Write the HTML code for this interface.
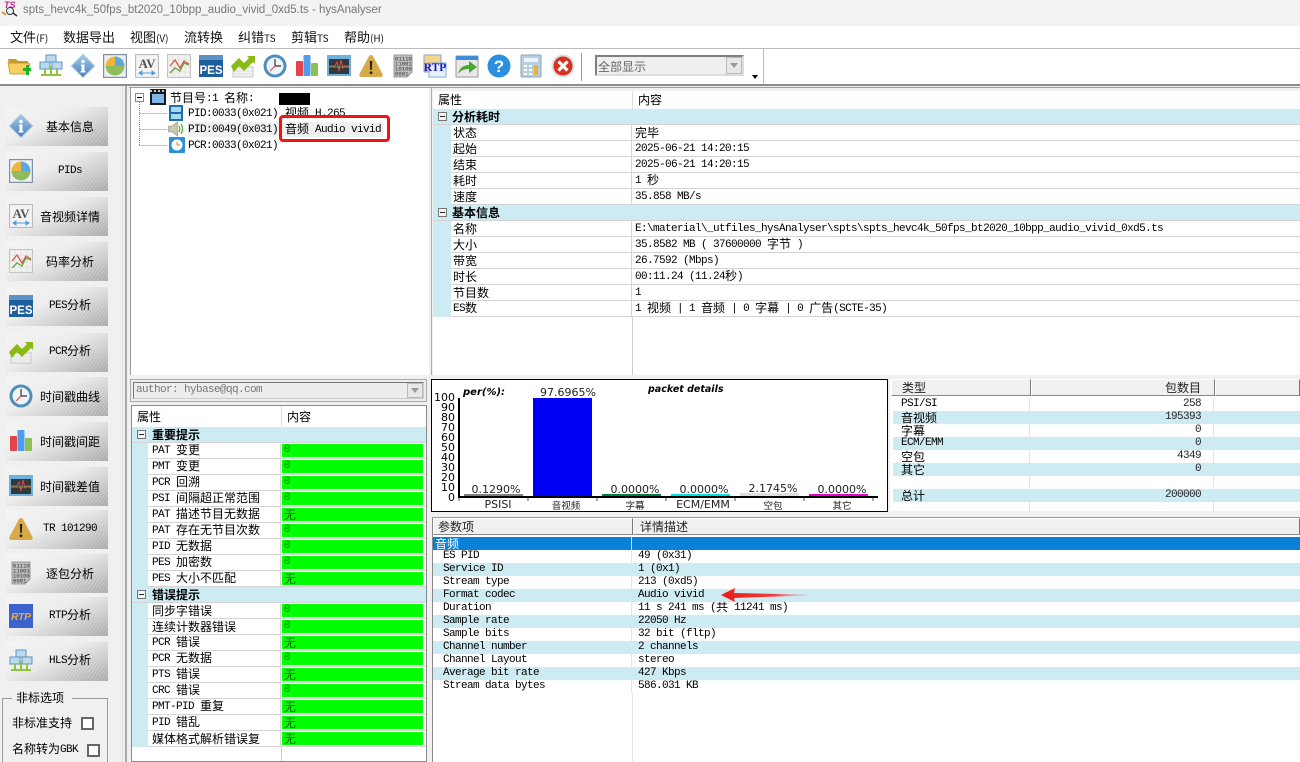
<!DOCTYPE html>
<html><head><meta charset="utf-8"><style>
*{box-sizing:border-box;margin:0;padding:0}
html,body{width:1300px;height:762px;overflow:hidden;background:#f0f0f0}
body{position:relative;font:12px "WenQuanYi Zen Hei","Noto Sans CJK SC",sans-serif;color:#000}
.p{position:absolute}
s{text-decoration:none;font-size:12px;letter-spacing:0;line-height:0;position:relative;top:1px;font-family:"WenQuanYi Zen Hei","Noto Sans CJK SC",sans-serif}
.m{font-family:"Liberation Mono",monospace;font-size:11px;letter-spacing:-.6px;white-space:pre}
#menu span{position:absolute;top:28px;font:13px/17px "Noto Sans CJK SC",sans-serif;color:#111;white-space:pre}
#menu small{font-size:10px}
.ti{position:absolute;top:54px;width:24px;height:24px}
.btn{position:absolute;left:6px;width:102px;height:39px;background:repeating-linear-gradient(125deg,rgba(255,255,255,.22) 0 1px,rgba(255,255,255,0) 1px 3px),linear-gradient(155deg,#f3f3f3 0,#ececec 40%,#d2d2d2 65%,#a8a8a8 100%)}
.btn svg{position:absolute;left:3px;top:7px;width:24px;height:24px}
.btn b{position:absolute;left:26px;right:0;top:0;text-align:center;font-weight:normal;line-height:39px;white-space:pre}
.t{position:absolute;background:#fff;overflow:hidden}
.r{display:flex;white-space:pre;border-bottom:1px solid #d4d4d4}
.r>*{display:block;flex:none;overflow:hidden}
.r>.g{margin-bottom:-1px;overflow:visible}
.sec{background:#cdebf2;font-weight:bold;position:relative;white-space:pre;border-bottom:1px solid #d4d4d4}
.sec i{position:absolute;width:9px;height:9px;border:1px solid #777;background:#f4f4f4}
.sec i:after{content:"";position:absolute;left:1px;right:1px;top:3px;height:1px;background:#222}
#tA{left:433px;top:91px;width:867px;height:284px}
#tA .r,#tA .sec{height:16px;line-height:15px}
#tA .g{width:18px;background:#cdebf2}
#tA .a{width:181px;padding-left:2px;border-right:1px solid #d4d4d4}
#tA .b{padding-left:3px}
#tA .m{padding-top:1px}
#tA .sec{padding-left:19px}
#tA .sec i{left:5px;top:3px}
#tB{left:131px;top:405px;width:296px;height:357px;border:1px solid #8a8a8a}
#tB .r,#tB .sec{height:16px;line-height:15px}
#tB .g{width:16px;background:#cdebf2}
#tB .a{width:133px;padding-left:4px;border-right:1px solid #d4d4d4}
#tB .a.m{padding-top:1px}
#tB .b{width:141px;height:13px;margin:1px 0 0 1px;background:#0f0;padding-left:2px;line-height:13px;color:#060}
#tB .sec{padding-left:20px}
#tB .sec i{left:5px;top:3px}
#tD{left:890px;top:379px;width:410px;height:132px}
.hd{position:absolute;top:0;height:17px;background:#f0f0f0;border:1px solid;border-color:#fff #777 #888 #fff;line-height:16px;color:#222}
#tD .r{position:absolute;left:3px;width:407px;height:13px;line-height:13px;border:0;overflow:hidden}
#tD .r.c,#tE .r.c{background:#cdebf2}
#tD .a{width:137px;padding-left:8px;border-right:1px solid #e4e4e4}
#tD .b{width:184px;padding-right:12px;text-align:right;border-right:1px solid #e4e4e4;color:#222}
#tE{left:432px;top:518px;width:868px;height:244px}
#tE .r{height:13px;line-height:13px;border:0}
#tE .a{width:200px;padding-left:11px;border-right:1px solid #e4e4e4}
#tE .b{padding-left:6px}
</style></head><body>
<svg width="0" height="0" style="position:absolute"><defs>
<linearGradient id="gB" x1="0" y1="0" x2="0" y2="1"><stop offset="0" stop-color="#a9cdec"/><stop offset="1" stop-color="#3f7db8"/></linearGradient>
<linearGradient id="gArrow" x1="0" y1="0" x2="1" y2="0"><stop offset="0" stop-color="#f01818"/><stop offset=".6" stop-color="#f23c3c"/><stop offset="1" stop-color="#f6b0b0" stop-opacity=".4"/></linearGradient>
<symbol id="folder" viewBox="0 0 24 24"><path d="M1 5h8l2 2h10v13H3z" fill="#c99a2c"/><path d="M1 9h20l2 1-3 10H3z" fill="#f6cf5e" stroke="#c0902a" stroke-width=".7"/><path d="M16 14h3v-3h3v3h2v3h-2v4h-3v-4h-3z" fill="#1fb32c"/></symbol>
<symbol id="net" viewBox="0 0 24 24"><path d="M7 1h10v7H7zM1 8h10v7H1zM13 8h10v7H13z" fill="#bcd9ef" stroke="#5f93bf"/><path d="M2 21h20M6 15v6M12 12v9M18 15v6" stroke="#8fc43c" stroke-width="2" fill="none"/></symbol>
<symbol id="info" viewBox="0 0 24 24"><path d="M12 0.5 23.500 12 12 23.500.5 12z" fill="url(#gB)" stroke="#a6c3dc"/><circle cx="12" cy="7.500" r="1.800" fill="#fff"/><path d="M10 10.500h3.500v6.500h1v1.500h-5V17h1v-5H10z" fill="#fff"/></symbol>
<symbol id="pie" viewBox="0 0 24 24"><rect x=".6" y=".6" width="22.800" height="22.800" fill="#eef0f2" stroke="#7f90a0" stroke-width="1.200"/><path d="M12 12V2.500A9.500 9.500 0 0 0 2.500 12z" fill="#f0b63c"/><path d="M12 12V2.500A9.500 9.500 0 0 1 21.500 12z" fill="#5da8dc"/><path d="M2.500 12a9.500 9.500 0 0 0 19 0z" fill="#90bc5c"/></symbol>
<symbol id="av" viewBox="0 0 24 24"><rect x=".5" y=".5" width="23" height="23" fill="#f4f4f4" stroke="#bbb" stroke-width="1.200"/><text x="12" y="14" text-anchor="middle" font-family="Liberation Serif" font-weight="bold" font-size="13" fill="#555">AV</text><path d="M4 19h16M4 19l3-2v4zM20 19l-3-2v4z" stroke="#4b9fe0" fill="#4b9fe0"/></symbol>
<symbol id="line" viewBox="0 0 24 24"><rect x=".5" y=".5" width="23" height="23" fill="#f2f2f2" stroke="#c4c4c4" stroke-width="1.200"/><path d="M6 1v22M12 1v22M18 1v22M1 6h22M1 12h22M1 18h22" stroke="#ddd" stroke-width=".7"/><path d="M3 12l5-6 5 8 4-7 5 3" stroke="#d9584a" fill="none" stroke-width="1.300"/><path d="M3 19l5-5 5 3 4-8 5 2" stroke="#6aa33c" fill="none" stroke-width="1.300"/></symbol>
<symbol id="pes" viewBox="0 0 24 24"><path d="M0 1h24v6H0z" fill="#5c93c4"/><rect y="6" width="24" height="17" fill="#1d5f9c"/><text x="12" y="20" text-anchor="middle" font-family="Liberation Sans" font-weight="bold" font-size="11.500" fill="#fff">PES</text></symbol>
<symbol id="trend" viewBox="0 0 24 24"><path d="M2 13h20v10H2z" fill="#f2f2f2" stroke="#c6c6c6"/><path d="M2 17h20M2 20h20" stroke="#ddd"/><path d="M0 12 8 4l5 5 5-5-2-2h8v8l-2-2-9 9-5-5-5 6z" fill="#8cba14"/></symbol>
<symbol id="clock" viewBox="0 0 24 24"><circle cx="12" cy="12" r="11.500" fill="#4f8dbb"/><circle cx="12" cy="12" r="8.500" fill="#eef4f8"/><path d="M12 12V5M12 12h6" stroke="#333" fill="none" stroke-width="1.200"/><path d="M12 12l-5 5" stroke="#d2544a" stroke-width="1.200"/></symbol>
<symbol id="bars" viewBox="0 0 24 24"><rect x="1" y="7" width="7" height="15" rx="1" fill="#e5434a"/><rect x="8.500" y="1" width="7" height="21" rx="1" fill="#4f9cec"/><rect x="16" y="9" width="7" height="13" rx="1" fill="#8cbf55"/></symbol>
<symbol id="mon" viewBox="0 0 24 24"><rect y="1" width="24" height="21" fill="#6fb1dd"/><rect x="2" y="5" width="20" height="15" fill="#2e3a40"/><path d="M2 12h6l2-4 2 9 2-11 2 8 1-2h5" stroke="#e44" fill="none"/><path d="M2 13h20" stroke="#5c5" stroke-width=".8"/></symbol>
<symbol id="warn" viewBox="0 0 24 24"><path d="M12 1c1 0 1.800.6 2.500 2L23.500 20c.7 1.800-.3 3-2 3h-19c-1.700 0-2.700-1.200-2-3L9.500 3C10.200 1.600 11 1 12 1z" fill="#d7a947"/><path d="M10.800 7h2.400l-.4 9h-1.600z" fill="#222"/><circle cx="12" cy="18.800" r="1.400" fill="#222"/></symbol>
<symbol id="bin" viewBox="0 0 24 24"><path d="M3 1h18v17l-5 5H3z" fill="#bdbdbd" stroke="#999"/><g font-family="Liberation Mono" font-size="5.600" fill="#333"><text x="4" y="6.500">01110</text><text x="4" y="11.500">11001</text><text x="4" y="16.500">10100</text><text x="4" y="21.500">0001</text></g></symbol>
<symbol id="rtp" viewBox="0 0 24 24"><rect x="1" y="1" width="17" height="17" fill="#f3d58c" stroke="#7fa8cf"/><rect x="6" y="9" width="17" height="14" fill="#e8f1f8" stroke="#7fa8cf"/><text x="12" y="17" text-anchor="middle" font-family="Liberation Serif" font-weight="bold" font-size="11.500" fill="#1515e0">RTP</text></symbol>
<symbol id="rtp2" viewBox="0 0 24 24"><rect width="24" height="24" fill="#3c62cf"/><text x="12" y="16" text-anchor="middle" font-family="Liberation Sans" font-weight="bold" font-style="italic" font-size="10" fill="#f6a93a">RTP</text></symbol>
<symbol id="go" viewBox="0 0 24 24"><rect x="1" y="2" width="22" height="21" fill="#e8e8e8" stroke="#999"/><rect x="1" y="2" width="22" height="4" fill="#3c8fd8"/><path d="M3 20c1-6 6-9 11-9V7l8 6-8 6v-4c-4 0-8 1-11 5z" fill="#49a62e"/></symbol>
<symbol id="help" viewBox="0 0 24 24"><circle cx="12" cy="12" r="11.500" fill="#2b8fe0"/><text x="12" y="18" text-anchor="middle" font-family="Liberation Sans" font-weight="bold" font-size="17" fill="#fff">?</text></symbol>
<symbol id="calc" viewBox="0 0 24 24"><rect x="2" y="1" width="20" height="22" rx="1" fill="#b7cfe3" stroke="#8ba4b8"/><rect x="5" y="4" width="14" height="4" fill="#eef4f8"/><path d="M5 11h3v2H5zM10 11h3v2h-3zM5 15h3v2H5zM10 15h3v2h-3zM5 19h3v2H5zM10 19h3v2h-3z" fill="#fff"/><path d="M15 11h4v10h-4z" fill="#e8b040"/></symbol>
<symbol id="close" viewBox="0 0 24 24"><circle cx="12" cy="12" r="11.500" fill="#ddd"/><circle cx="12" cy="12" r="9.500" fill="#d83020"/><path d="M7.500 7.500l9 9M16.500 7.500l-9 9" stroke="#fff" stroke-width="3.200"/></symbol>
<symbol id="film" viewBox="0 0 16 16"><rect width="16" height="16" fill="#1a1a1a"/><rect x="2" y="5" width="12" height="9" fill="#7fb8e6"/><path d="M0 2h16" stroke="#ccc" stroke-width="2" stroke-dasharray="2 2"/></symbol>
<symbol id="vid" viewBox="0 0 16 16"><rect x="1" width="14" height="16" fill="#1d6fa8"/><rect x="3" y="2" width="10" height="5" fill="#a9d8f2"/><rect x="3" y="9" width="10" height="5" fill="#a9d8f2"/></symbol>
<symbol id="snd" viewBox="0 0 16 16"><path d="M1 5h4l5-4v14l-5-4H1z" fill="#c9c9a8" stroke="#888" stroke-width=".6"/><path d="M11.500 5c1 2 1 4 0 6M13.500 3c2 3 2 7 0 10" stroke="#58b030" fill="none" stroke-width="1.300"/></symbol>
<symbol id="clk2" viewBox="0 0 16 16"><rect width="16" height="16" rx="1" fill="#2f90d8"/><circle cx="8" cy="8" r="5.500" fill="#fff"/><path d="M8 8V5M8 8h3" stroke="#c83"/></symbol>
</defs></svg>

<div class="p" style="left:0;top:0;width:1300px;height:26px;background:#f3f3f3"></div>
<svg class="p" style="left:1px;top:0" width="18" height="18" viewBox="0 0 18 18"><text x="3" y="8" font-family="Liberation Sans" font-weight="bold" font-style="italic" font-size="9" fill="#d02090">TS</text><circle cx="9" cy="11" r="3.500" fill="#e8f2f8" stroke="#333"/><path d="M12 13l4 3" stroke="#333" stroke-width="1.500"/><path d="M1 12l4 3" stroke="#c8a030" stroke-width="2"/></svg>
<div class="p" style="left:23px;top:2px;font:11.500px/17px 'Liberation Sans',sans-serif;color:#777;white-space:pre">spts_hevc4k_50fps_bt2020_10bpp_audio_vivid_0xd5.ts - hysAnalyser</div>

<div id="menu" class="p" style="left:0;top:0;width:1300px;height:48px"><div class="p" style="left:0;top:26px;width:1300px;height:22px;background:#fff"></div>
<span style="left:10px">文件<small>(F)</small></span><span style="left:63px">数据导出</span><span style="left:130px">视图<small>(V)</small></span><span style="left:184px">流转换</span><span style="left:238px">纠错<small>TS</small></span><span style="left:291px">剪辑<small>TS</small></span><span style="left:344px">帮助<small>(H)</small></span></div>

<div class="p" style="left:0;top:48px;width:1300px;height:38px;background:#fff;border-top:1px solid #bbb;border-bottom:2px solid #8c8c8c"></div>
<div class="p" style="left:763px;top:48px;width:1px;height:36px;background:#bbb"></div>
<svg class="ti" style="left:7px"><use href="#folder"/></svg>
<svg class="ti" style="left:39px"><use href="#net"/></svg>
<svg class="ti" style="left:71px"><use href="#info"/></svg>
<svg class="ti" style="left:103px"><use href="#pie"/></svg>
<svg class="ti" style="left:135px"><use href="#av"/></svg>
<svg class="ti" style="left:167px"><use href="#line"/></svg>
<svg class="ti" style="left:199px"><use href="#pes"/></svg>
<svg class="ti" style="left:231px"><use href="#trend"/></svg>
<svg class="ti" style="left:263px"><use href="#clock"/></svg>
<svg class="ti" style="left:295px"><use href="#bars"/></svg>
<svg class="ti" style="left:327px"><use href="#mon"/></svg>
<svg class="ti" style="left:359px"><use href="#warn"/></svg>
<svg class="ti" style="left:391px"><use href="#bin"/></svg>
<svg class="ti" style="left:423px"><use href="#rtp"/></svg>
<svg class="ti" style="left:455px"><use href="#go"/></svg>
<svg class="ti" style="left:487px"><use href="#help"/></svg>
<svg class="ti" style="left:519px"><use href="#calc"/></svg>
<svg class="ti" style="left:551px"><use href="#close"/></svg>
<div class="p" style="left:581px;top:53px;width:1px;height:28px;background:#999"></div>
<div class="p" style="left:595px;top:55px;width:149px;height:21px;background:#efefef;border:2px solid #808080;border-right-color:#ddd;border-bottom-color:#ddd;color:#666;line-height:19px;padding-left:1px">全部显示</div>
<div class="p" style="left:726px;top:57px;width:16px;height:17px;background:#e8e8e8;border:1px solid #bbb"></div>
<div class="p" style="left:730px;top:63px;border:4px solid transparent;border-top:5px solid #999"></div>
<div class="p" style="left:752px;top:75px;border:3px solid transparent;border-top:4px solid #000"></div>

<div class="p" style="left:122px;top:86px;width:1px;height:676px;background:#ddd"></div>
<div class="p" style="left:125px;top:86px;width:2px;height:676px;background:#a8a8a8"></div>

<div class="btn" style="top:107px"><svg><use href="#info"/></svg><b>基本信息</b></div>
<div class="btn" style="top:152px"><svg><use href="#pie"/></svg><b class="m">PIDs</b></div>
<div class="btn" style="top:197px"><svg><use href="#av"/></svg><b>音视频详情</b></div>
<div class="btn" style="top:242px"><svg><use href="#line"/></svg><b>码率分析</b></div>
<div class="btn" style="top:287px"><svg><use href="#pes"/></svg><b class="m">PES<s>分析</s></b></div>
<div class="btn" style="top:333px"><svg><use href="#trend"/></svg><b class="m">PCR<s>分析</s></b></div>
<div class="btn" style="top:377px"><svg><use href="#clock"/></svg><b>时间戳曲线</b></div>
<div class="btn" style="top:422px"><svg><use href="#bars"/></svg><b>时间戳间距</b></div>
<div class="btn" style="top:467px"><svg><use href="#mon"/></svg><b>时间戳差值</b></div>
<div class="btn" style="top:510px"><svg><use href="#warn"/></svg><b class="m">TR 101290</b></div>
<div class="btn" style="top:554px"><svg><use href="#bin"/></svg><b>逐包分析</b></div>
<div class="btn" style="top:597px"><svg><use href="#rtp2"/></svg><b class="m">RTP<s>分析</s></b></div>
<div class="btn" style="top:642px"><svg><use href="#net"/></svg><b class="m">HLS<s>分析</s></b></div>

<div class="p" style="left:2px;top:698px;width:106px;height:70px;border:1px solid #999"></div>
<div class="p" style="left:12px;top:690px;padding:0 4px;background:#f0f0f0;line-height:16px;width:60px">非标选项</div>
<div class="p" style="left:12px;top:715px;line-height:16px">非标准支持</div>
<div class="p" style="left:81px;top:717px;width:13px;height:13px;background:#fff;border:2px solid #666"></div>
<div class="p m" style="left:12px;top:742px;line-height:16px"><s>名称转为</s>GBK</div>
<div class="p" style="left:87px;top:744px;width:13px;height:13px;background:#fff;border:2px solid #666"></div>

<div class="p" style="left:129px;top:87px;width:1171px;height:1px;background:#a0a0a0"></div>
<div class="t" style="left:130px;top:88px;width:299px;height:287px;border-left:1px solid #999">
<svg class="p" width="60" height="70" style="left:0;top:0"><path d="M8.500 14v43M8.500 25.500h28M8.500 41.500h28M8.500 57.500h28" stroke="#888" stroke-dasharray="1 1" fill="none"/><rect x="4.500" y="5.500" width="8" height="8" fill="#fff" stroke="#888"/><path d="M6 9.500h5" stroke="#000"/><use href="#film" x="19" y="1" width="16" height="16"/><use href="#vid" x="37" y="17" width="16" height="16"/><use href="#snd" x="36" y="33" width="17" height="16"/><use href="#clk2" x="38" y="49" width="16" height="16"/></svg>
<div class="p" style="left:39px;top:1px;line-height:16px;white-space:pre"><s>节目号</s><span class="m">:1 </span><s>名称</s><span class="m">:</span></div>
<div class="p" style="left:148px;top:5px;width:31px;height:12px;background:#000"></div>
<div class="p m" style="left:57px;top:18px;line-height:16px">PID:0033(0x021)</div>
<div class="p m" style="left:154px;top:18px;line-height:16px"><s>视频</s> H.265</div>
<div class="p" style="left:57px;top:34px;width:195px;height:15px;background:#f0f0f0"></div>
<div class="p m" style="left:57px;top:34px;line-height:16px">PID:0049(0x031)</div>
<div class="p m" style="left:154px;top:34px;line-height:16px"><s>音频</s> Audio vivid</div>
<div class="p m" style="left:57px;top:50px;line-height:16px">PCR:0033(0x021)</div>
<div class="p" style="left:148px;top:27px;width:111px;height:27px;border:3px solid #f01414;border-radius:4px"></div>
</div>
<div class="p" style="left:431px;top:88px;width:1px;height:287px;background:#aaa"></div>

<div class="p" style="left:130px;top:379px;width:297px;height:23px;background:#ededed;border:1px solid #aaa"></div>
<div class="p m" style="left:133px;top:382px;width:291px;height:17px;border:1px solid #777;border-right-color:#ccc;border-bottom-color:#ccc;color:#777;line-height:15px;padding-left:2px">author: hybase@qq.com</div>
<div class="p" style="left:407px;top:383px;width:16px;height:15px;background:#e8e8e8;border:1px solid #bbb"></div>
<div class="p" style="left:411px;top:388px;border:4px solid transparent;border-top:5px solid #999"></div>

<div class="t" id="tB">
<div style="height:21px;line-height:21px;position:relative;white-space:pre"><span class="p" style="left:5px">属性</span><span class="p" style="left:155px">内容</span><span class="p" style="left:149px;top:0;width:1px;height:21px;background:#ddd"></span></div>
<div class="sec">重要提示<i></i></div>
<div class="r"><i class="g"></i><span class="a m">PAT <s>变更</s></span><span class="b m">0</span></div>
<div class="r"><i class="g"></i><span class="a m">PMT <s>变更</s></span><span class="b m">0</span></div>
<div class="r"><i class="g"></i><span class="a m">PCR <s>回溯</s></span><span class="b m">0</span></div>
<div class="r"><i class="g"></i><span class="a m">PSI <s>间隔超正常范围</s></span><span class="b m">0</span></div>
<div class="r"><i class="g"></i><span class="a m">PAT <s>描述节目无数据</s></span><span class="b">无</span></div>
<div class="r"><i class="g"></i><span class="a m">PAT <s>存在无节目次数</s></span><span class="b m">0</span></div>
<div class="r"><i class="g"></i><span class="a m">PID <s>无数据</s></span><span class="b m">0</span></div>
<div class="r"><i class="g"></i><span class="a m">PES <s>加密数</s></span><span class="b m">0</span></div>
<div class="r"><i class="g"></i><span class="a m">PES <s>大小不匹配</s></span><span class="b">无</span></div>
<div class="sec">错误提示<i></i></div>
<div class="r"><i class="g"></i><span class="a">同步字错误</span><span class="b m">0</span></div>
<div class="r"><i class="g"></i><span class="a">连续计数器错误</span><span class="b m">0</span></div>
<div class="r"><i class="g"></i><span class="a m">PCR <s>错误</s></span><span class="b">无</span></div>
<div class="r"><i class="g"></i><span class="a m">PCR <s>无数据</s></span><span class="b m">0</span></div>
<div class="r"><i class="g"></i><span class="a m">PTS <s>错误</s></span><span class="b">无</span></div>
<div class="r"><i class="g"></i><span class="a m">CRC <s>错误</s></span><span class="b m">0</span></div>
<div class="r"><i class="g"></i><span class="a m">PMT-PID <s>重复</s></span><span class="b">无</span></div>
<div class="r"><i class="g"></i><span class="a m">PID <s>错乱</s></span><span class="b">无</span></div>
<div class="r"><i class="g"></i><span class="a">媒体格式解析错误复</span><span class="b">无</span></div>
<div class="p" style="left:149px;top:341px;width:1px;height:16px;background:#ccc"></div>
</div>

<div class="t" id="tA">
<div style="height:18px;line-height:18px;position:relative;white-space:pre"><span class="p" style="left:5px">属性</span><span class="p" style="left:205px">内容</span><span class="p" style="left:199px;top:0;width:1px;height:18px;background:#ddd"></span></div>
<div class="sec">分析耗时<i></i></div>
<div class="r"><i class="g"></i><span class="a">状态</span><span class="b">完毕</span></div>
<div class="r"><i class="g"></i><span class="a">起始</span><span class="b m">2025-06-21 14:20:15</span></div>
<div class="r"><i class="g"></i><span class="a">结束</span><span class="b m">2025-06-21 14:20:15</span></div>
<div class="r"><i class="g"></i><span class="a">耗时</span><span class="b m">1 <s>秒</s></span></div>
<div class="r"><i class="g"></i><span class="a">速度</span><span class="b m">35.858 MB/s</span></div>
<div class="sec">基本信息<i></i></div>
<div class="r"><i class="g"></i><span class="a">名称</span><span class="b m">E:\material\_utfiles_hysAnalyser\spts\spts_hevc4k_50fps_bt2020_10bpp_audio_vivid_0xd5.ts</span></div>
<div class="r"><i class="g"></i><span class="a">大小</span><span class="b m">35.8582 MB ( 37600000 <s>字节</s> )</span></div>
<div class="r"><i class="g"></i><span class="a">带宽</span><span class="b m">26.7592 (Mbps)</span></div>
<div class="r"><i class="g"></i><span class="a">时长</span><span class="b m">00:11.24 (11.24<s>秒</s>)</span></div>
<div class="r"><i class="g"></i><span class="a">节目数</span><span class="b m">1</span></div>
<div class="r"><i class="g"></i><span class="a m">ES<s>数</s></span><span class="b m">1 <s>视频</s> | 1 <s>音频</s> | 0 <s>字幕</s> | 0 <s>广告</s>(SCTE-35)</span></div>
<div class="p" style="left:199px;top:226px;width:1px;height:58px;background:#ccc"></div>
</div>

<div class="p" style="left:431px;top:379px;width:457px;height:133px;background:#fff;border:1px solid #000"></div>
<svg class="p" style="left:431px;top:379px" width="457" height="133" font-family="DejaVu Sans,sans-serif" font-size="11">
<path d="M28 19V118H447" stroke="#000" stroke-width="2" fill="none"/>
<path d="M28 119v3M97 119v3M166 119v3M235 119v3M304 119v3M373 119v3M442 119v3" stroke="#555"/>
<g text-anchor="end" font-size="11"><text x="24" y="22">100</text><text x="24" y="32">90</text><text x="24" y="42">80</text><text x="24" y="52">70</text><text x="24" y="62">60</text><text x="24" y="72">50</text><text x="24" y="82">40</text><text x="24" y="92">30</text><text x="24" y="102">20</text><text x="24" y="112">10</text><text x="24" y="122">0</text></g>
<text x="32" y="16" font-weight="bold" font-style="italic" font-size="10">per(%):</text>
<text x="217" y="13" font-weight="bold" font-style="italic" font-size="9.500">packet details</text>
<rect x="33" y="115" width="59" height="2" fill="#808080"/>
<rect x="102" y="19" width="59" height="98" fill="#0000f5"/>
<rect x="171" y="115" width="59" height="2" fill="#008040"/>
<rect x="240" y="115" width="59" height="2" fill="#00e0e0"/>
<rect x="309" y="114" width="59" height="3" fill="#ddd"/>
<rect x="378" y="115" width="59" height="2" fill="#f000d0"/>
<g text-anchor="middle" fill="#222"><text x="65" y="114">0.1290%</text><text x="137" y="17">97.6965%</text><text x="204" y="114">0.0000%</text><text x="273" y="114">0.0000%</text><text x="342" y="113">2.1745%</text><text x="411" y="114">0.0000%</text>
<text x="67" y="129">PSISI</text><text x="135" y="130" font-size="9.500" font-family="WenQuanYi Zen Hei">音视频</text><text x="204" y="130" font-size="9.500" font-family="WenQuanYi Zen Hei">字幕</text><text x="272" y="129">ECM/EMM</text><text x="342" y="130" font-size="9.500" font-family="WenQuanYi Zen Hei">空包</text><text x="411" y="130" font-size="9.500" font-family="WenQuanYi Zen Hei">其它</text></g>
</svg>

<div class="t" id="tD">
<div class="hd" style="left:1px;width:140px;padding-left:10px">类型</div>
<div class="hd" style="left:141px;width:184px;text-align:right;padding-right:13px">包数目</div>
<div class="hd" style="left:325px;width:85px"></div>
<div class="r" style="top:19px"><span class="a m">PSI/SI</span><span class="b m">258</span></div>
<div class="r c" style="top:32px"><span class="a">音视频</span><span class="b m">195393</span></div>
<div class="r" style="top:45px"><span class="a">字幕</span><span class="b m">0</span></div>
<div class="r c" style="top:58px"><span class="a m">ECM/EMM</span><span class="b m">0</span></div>
<div class="r" style="top:71px"><span class="a">空包</span><span class="b m">4349</span></div>
<div class="r c" style="top:84px"><span class="a">其它</span><span class="b m">0</span></div>
<div class="r" style="top:97px"><span class="a"> </span><span class="b"> </span></div>
<div class="r c" style="top:110px"><span class="a">总计</span><span class="b m">200000</span></div>
<div class="r" style="top:123px"><span class="a"> </span><span class="b"> </span></div>
</div>

<div class="t" id="tE">
<div class="hd" style="left:1px;width:200px;padding-left:4px">参数项</div>
<div class="hd" style="left:201px;width:667px;padding-left:6px">详情描述</div>
<div style="height:19px"></div>
<div class="r" style="background:#0a80d8;color:#fff;height:13px"><span style="width:200px;padding-left:3px;border-right:1px solid #cde">音频</span></div>
<div class="r m"><span class="a">ES PID</span><span class="b">49 (0x31)</span></div>
<div class="r m c"><span class="a">Service ID</span><span class="b">1 (0x1)</span></div>
<div class="r m"><span class="a">Stream type</span><span class="b">213 (0xd5)</span></div>
<div class="r m c"><span class="a">Format codec</span><span class="b">Audio vivid</span></div>
<div class="r m"><span class="a">Duration</span><span class="b">11 s 241 ms (<s>共</s> 11241 ms)</span></div>
<div class="r m c"><span class="a">Sample rate</span><span class="b">22050 Hz</span></div>
<div class="r m"><span class="a">Sample bits</span><span class="b">32 bit (fltp)</span></div>
<div class="r m c"><span class="a">Channel number</span><span class="b">2 channels</span></div>
<div class="r m"><span class="a">Channel Layout</span><span class="b">stereo</span></div>
<div class="r m c"><span class="a">Average bit rate</span><span class="b">427 Kbps</span></div>
<div class="r m"><span class="a">Stream data bytes</span><span class="b">586.031 KB</span></div>
<div class="p" style="left:200px;top:175px;width:1px;height:69px;background:#e4e4e4"></div>
</div>
<div class="p" style="left:432px;top:517px;width:868px;height:1px;background:#999"></div>
<div class="p" style="left:432px;top:518px;width:1px;height:244px;background:#888"></div>
<svg class="p" style="left:720px;top:586px" width="90" height="18"><path d="M1 9 15 2 14 7 88 8.500 88 9.500 14 12 15 16z" fill="url(#gArrow)"/></svg>
</body></html>
